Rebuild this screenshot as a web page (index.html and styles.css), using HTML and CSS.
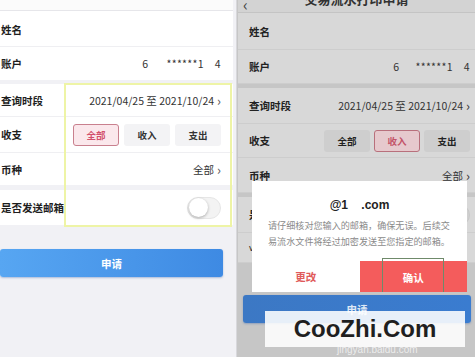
FILE: index.html
```html
<!DOCTYPE html>
<html lang="zh">
<head>
<meta charset="utf-8">
<link rel="stylesheet" href="styles.css">
</head>
<body>
<div class="wrap">
  <section class="panel left">
    <div class="lhead"></div>
    <div class="card">
      <div class="row r-name"><span class="lbl">姓名</span></div>
      <div class="row r-acct"><span class="lbl">账户</span><span class="val acct">6<i class="sp"></i>******1<i class="sp2"></i>4</span></div>
    </div>
    <div class="card">
      <div class="row r-date"><span class="lbl">查询时段</span><span class="val">2021/04/25 至 2021/10/24 <b class="chev">&#x203A;</b></span></div>
      <div class="row r-type"><span class="lbl">收支</span>
        <div class="seg">
          <span class="opt on">全部</span><span class="opt">收入</span><span class="opt">支出</span>
        </div>
      </div>
      <div class="row r-cur"><span class="lbl">币种</span><span class="val">全部 <b class="chev">&#x203A;</b></span></div>
    </div>
    <div class="card">
      <div class="row r-mail"><span class="lbl">是否发送邮箱</span><span class="toggle"><span class="knob"></span></span></div>
    </div>
    <div class="apply">申请</div>
    <div class="hl"></div>
  </section>

  <section class="panel right">
    <div class="rhead"><span class="back">&#x2039;</span><span class="title">交易流水打印申请</span></div>
    <div class="card">
      <div class="row r-name"><span class="lbl">姓名</span></div>
      <div class="row r-acct"><span class="lbl">账户</span><span class="val acct">6<i class="sp3"></i>******1<i class="sp2"></i>4</span></div>
    </div>
    <div class="card">
      <div class="row r-date"><span class="lbl">查询时段</span><span class="val">2021/04/25 至 2021/10/24 <b class="chev">&#x203A;</b></span></div>
      <div class="row r-type"><span class="lbl">收支</span>
        <div class="seg">
          <span class="opt">全部</span><span class="opt on">收入</span><span class="opt">支出</span>
        </div>
      </div>
      <div class="row r-cur"><span class="lbl">币种</span><span class="val">全部 <b class="chev">&#x203A;</b></span></div>
    </div>
    <div class="card">
      <div class="row r-mail"><span class="lbl">是否发送邮箱</span><span class="toggle"><span class="knob"></span></span></div>
      <div class="row r-agree"><span class="lbl small">v</span></div>
    </div>
    <div class="apply">申请</div>

    <div class="dialog">
      <div class="email">@1&nbsp;&nbsp;&nbsp;&nbsp;.com</div>
      <p class="msg">请仔细核对您输入的邮箱，确保无误。后续交易流水文件将经过加密发送至您指定的邮箱。</p>
      <div class="btns">
        <span class="b-edit">更改</span>
        <span class="b-ok"><span class="okbox">确认</span></span>
      </div>
    </div>

    <div class="mark">
      <span class="faint">jingyan.baidu.com</span>
      <span class="wm">CooZhi.Com</span>
    </div>
  </section>
</div>
</body>
</html>
```

FILE: styles.css
```css
* { box-sizing: border-box; margin: 0; padding: 0; }
html, body { width: 475px; height: 357px; overflow: hidden; }
body {
  font-family: "Noto Sans CJK SC", "Noto Sans", sans-serif;
  color: #222;
  background: #c9c9c9;
}
.wrap { display: flex; height: 357px; }

.panel { position: relative; height: 357px; overflow: hidden; display: flex; flex-direction: column; }

/* ---------- left ---------- */
.left {
  width: 237px;
  background: #f1f1f5;
  padding-right: 3px;
  border-right: 1px solid #d8d8dc;
}
.lhead { height: 11px; background: #fbfbfb; border-bottom: 1px solid #e6e6ea; flex: none; }
.card { background: #fff; margin-bottom: 4px; flex: none; }
.row {
  display: flex; align-items: center; justify-content: space-between;
  border-bottom: 1px solid #efeff2;
  padding: 0 12px 0 1px;
  font-size: 10.5px;
}
.row:last-child { border-bottom: none; }
.lbl { font-weight: 700; font-size: 10.5px; color: #1e1e1e; }
.val { font-size: 10.5px; color: #333; display: flex; align-items: center; }
.chev { font-weight: 400; font-size: 13px; margin-left: 3px; line-height: 1; color: #555; }
.sp { display: inline-block; width: 18px; }
.sp2 { display: inline-block; width: 11px; }
.sp3 { display: inline-block; width: 16px; }
.acct { letter-spacing: 0.3px; }

.left .r-name { height: 35px; margin-top: 1px; }
.left .r-acct { height: 33px; }
.left .r-date { height: 33px; }
.left .r-type { height: 36px; }
.left .r-cur { height: 32px; }
.left .card:nth-of-type(3) { margin-bottom: 5px; }
.left .r-mail { height: 35px; }

.seg { display: flex; gap: 5px; }
.opt {
  width: 46px; height: 22px; display: flex; align-items: center; justify-content: center;
  background: #f3f3f5; border-radius: 3px; font-size: 9.5px; font-weight: 700; color: #333;
  border: 1px solid transparent;
}
.opt.on { background: #fbe8ec; border-color: #c9808e; color: #d2506c; }

.toggle {
  width: 34px; height: 22px; border-radius: 11px; background: #f3f3f3;
  border: 1px solid #e6e6e6; display: flex; align-items: center; padding-left: 1px;
}
.knob { width: 19px; height: 19px; border-radius: 50%; background: #fff; box-shadow: 0 1px 3px rgba(0,0,0,.3); }

.apply {
  flex: none;
  height: 28px; margin-top: 20px; margin-right: 10px;
  border-radius: 3px;
  background: linear-gradient(90deg, #57a6f2, #3e8ae3);
  color: #fff; font-size: 10.5px; font-weight: 700;
  display: flex; align-items: center; justify-content: center;
  box-shadow: 0 1px 2px rgba(40,90,170,.35);
}

.hl {
  position: absolute; left: 64px; top: 83px; width: 168px; height: 144px;
  border: 2px solid #eef4a6;
}

/* ---------- right ---------- */
.right {
  width: 238px;
  background: #c6c6c6;
  padding-left: 1px;
}
.right .card { background: #d8d8d8; margin-bottom: 4px; }
.right .row { border-bottom: 1px solid #cdcdcd; padding: 0 5px 0 11px; }
.right .lbl { color: #222; }
.right .val, .right .chev { color: #333; }
.rhead {
  flex: none; height: 13px; background: #d3d3d3; border-bottom: 1px solid #c4c4c4;
  position: relative; overflow: hidden; display: flex; justify-content: center;
}
.rhead .title { font-size: 13px; font-weight: 700; color: #333; margin-top: -9px; line-height: 16px; }
.rhead .back { position: absolute; left: 5px; top: -8px; font-size: 16px; color: #444; }
.right .r-name { height: 37px; }
.right .r-acct { height: 34px; }
.right .r-date { height: 36px; }
.right .r-type { height: 34px; }
.right .r-cur { height: 35px; }
.right .r-mail { height: 36px; }
.right .r-agree { height: 30px; }
.right .lbl.small { font-weight: 400; font-size: 9px; }
.right .opt { background: #cecece; color: #222; }
.right .opt.on { background: #e6c9cd; border-color: #b8707c; color: #c35468; }
.right .seg { gap: 4px; }
.right .toggle { background: #d0d0d0; border-color: #c8c8c8; }
.right .knob { background: #dadada; }
.right .apply {
  margin: 28px 4px 0 5px;
  background: linear-gradient(90deg, #3c78c4, #3a7cd0);
  color: #dfe8f5;
}

.dialog {
  position: absolute; left: 15px; top: 181px; width: 215px; height: 111px;
  background: #fff; display: flex; flex-direction: column; align-items: center;
}
.email { margin-top: 16px; font-family: "Liberation Sans", "Noto Sans CJK SC", sans-serif; font-size: 12px; font-weight: 700; color: #222; line-height: 16px; }
.msg { margin-top: 4px; padding: 0 10px 0 16px; font-size: 9.1px; line-height: 16px; color: #8a8a8a; }
.btns { margin-top: auto; display: flex; width: 100%; height: 31px; }
.b-edit { flex: 1; display: flex; align-items: center; justify-content: center; color: #e05a5a; font-size: 10.5px; font-weight: 700; }
.b-ok { flex: 1; background: #f45c5c; display: flex; align-items: stretch; justify-content: center; color: #fff; font-size: 10.5px; font-weight: 700; }
.okbox { width: 62px; margin-top: -3px; border: 1px solid #6f8a6a; border-bottom: none; display: flex; align-items: center; justify-content: center; padding-top: 3px; }

.mark {
  position: absolute; left: 28px; top: 311px; width: 200px; height: 36px;
  background: rgba(255,255,255,0.88);
  display: flex; align-items: center; justify-content: center;
}
.wm { position: relative; font-family: "Liberation Sans", Arial, sans-serif; font-size: 24px; font-weight: 700; color: #1f1f1f; letter-spacing: 0; }
.faint { position: absolute; left: 72px; top: 33px; font-family: "Liberation Sans", sans-serif; font-size: 10px; color: rgba(255,255,255,.7); }
```
